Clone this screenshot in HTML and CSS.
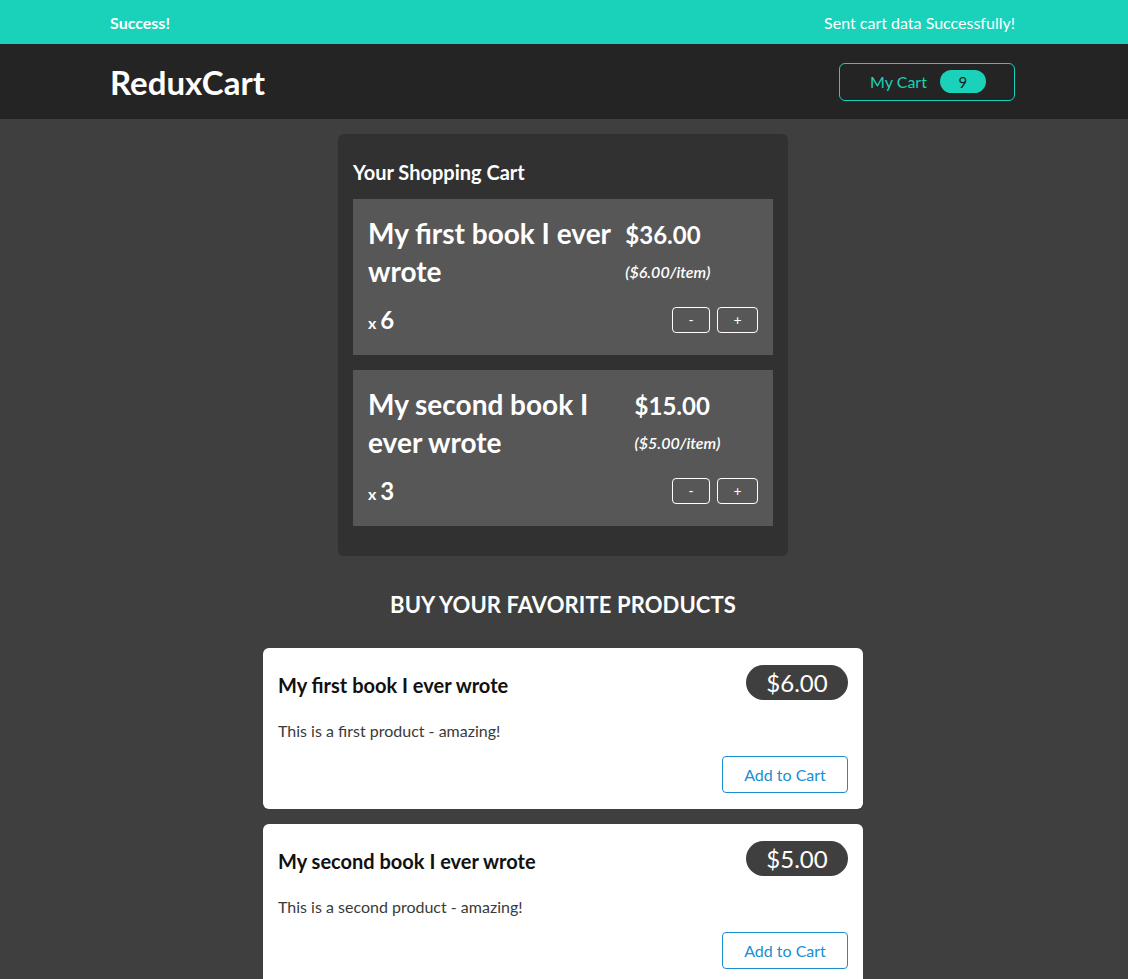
FILE: index.html
```html
<!DOCTYPE html>
<html lang="en">
<head>
<meta charset="utf-8">
<title>ReduxCart</title>
<link rel="stylesheet" href="styles.css">
</head>
<body>
  <section class="notification">
    <h2>Success!</h2>
    <p>Sent cart data Successfully!</p>
  </section>
  <header class="header">
    <h1>ReduxCart</h1>
    <nav>
      <button class="cart-button">
        <span>My Cart</span>
        <span class="badge">9</span>
      </button>
    </nav>
  </header>
  <main class="main">
    <section class="cart">
      <h2 class="cart-title">Your Shopping Cart</h2>
      <ul class="cart-list">
        <li class="item">
          <header class="item-header">
            <h3>My first book I ever wrote</h3>
            <div class="price">$36.00 <span class="itemprice">($6.00/item)</span></div>
          </header>
          <div class="details">
            <div class="quantity">x <span>6</span></div>
            <div class="actions">
              <button>-</button>
              <button>+</button>
            </div>
          </div>
        </li>
        <li class="item">
          <header class="item-header">
            <h3>My second book I ever wrote</h3>
            <div class="price">$15.00 <span class="itemprice">($5.00/item)</span></div>
          </header>
          <div class="details">
            <div class="quantity">x <span>3</span></div>
            <div class="actions">
              <button>-</button>
              <button>+</button>
            </div>
          </div>
        </li>
      </ul>
    </section>

    <section class="products">
      <h2>BUY YOUR FAVORITE PRODUCTS</h2>
      <ul class="product-list">
        <li class="product">
          <header class="product-header">
            <h3>My first book I ever wrote</h3>
            <div class="product-price">$6.00</div>
          </header>
          <p>This is a first product - amazing!</p>
          <div class="product-actions">
            <button>Add to Cart</button>
          </div>
        </li>
        <li class="product">
          <header class="product-header">
            <h3>My second book I ever wrote</h3>
            <div class="product-price">$5.00</div>
          </header>
          <p>This is a second product - amazing!</p>
          <div class="product-actions">
            <button>Add to Cart</button>
          </div>
        </li>
      </ul>
    </section>
  </main>
</body>
</html>
```

FILE: styles.css
```css
* { box-sizing: border-box; }

html, body {
  margin: 0;
  padding: 0;
}

body {
  font-family: Lato, "Noto Sans", sans-serif;
  background-color: #3f3f3f;
  height: 979px;
  overflow: hidden;
}

.notification {
  height: 44px;
  background-color: #1ad1b9;
  display: flex;
  justify-content: space-between;
  align-items: center;
  padding: 0 113px 0 110px;
  color: white;
}

.notification h2,
.notification p {
  font-size: 16px;
  margin: 0;
}

.notification h2 { font-weight: bold; }

.header {
  height: 75px;
  background-color: #252424;
  display: flex;
  justify-content: space-between;
  align-items: center;
  padding: 0 113px 0 110px;
}

.header h1 {
  margin: 0;
  color: white;
  font-size: 33px;
  font-weight: bold;
}

.cart-button {
  width: 176px;
  height: 38px;
  background: transparent;
  border: 1px solid #1ad1b9;
  border-radius: 6px;
  color: #1ad1b9;
  font-family: inherit;
  font-size: 16px;
  display: flex;
  align-items: center;
  justify-content: center;
  gap: 13px;
  padding: 0 0 0 2px;
}

.badge {
  background-color: #1ad1b9;
  color: #1d1d1d;
  border-radius: 30px;
  width: 46px;
  height: 23px;
  display: inline-flex;
  align-items: center;
  justify-content: center;
  font-size: 15px;
}

.main {
  display: flex;
  flex-direction: column;
  align-items: center;
  padding: 15px 2px 0 0;
}

.cart {
  width: 450px;
  background-color: #313131;
  border-radius: 6px;
  padding: 26px 15px 30px;
  color: white;
}

.cart-title {
  margin: 0 0 15px;
  font-size: 20px;
  font-weight: bold;
}

.cart-list,
.product-list {
  list-style: none;
  margin: 0;
  padding: 0;
}

.item {
  background-color: #575757;
  padding: 15px 15px 21px;
  margin-bottom: 15px;
}

.item:last-child { margin-bottom: 0; }

.item-header {
  display: flex;
  justify-content: space-between;
}

.item h3 {
  margin: 0 0 15px;
  font-size: 28px;
  line-height: 38px;
  font-weight: bold;
}

.price {
  font-size: 24px;
  font-weight: bold;
  line-height: 34px;
  padding-top: 4px;
}

.itemprice {
  font-size: 16px;
  font-style: italic;
  font-weight: 600;
}

.details {
  display: flex;
  justify-content: space-between;
  align-items: center;
}

.quantity {
  font-size: 16px;
  font-weight: bold;
}

.quantity span {
  font-size: 24px;
}

.actions {
  display: flex;
  gap: 7px;
}

.actions button {
  background: transparent;
  border: 1px solid white;
  border-radius: 4px;
  color: white;
  font-family: inherit;
  font-size: 14px;
  height: 26px;
  width: 38px;
  padding: 0;
}

.actions button:last-child { width: 41px; }

.products {
  display: flex;
  flex-direction: column;
  align-items: center;
  margin-top: 35px;
}

.products h2 {
  margin: 0 0 30px;
  color: white;
  font-size: 22px;
  font-weight: bold;
  letter-spacing: 0.1px;
}

.product {
  width: 600px;
  background: white;
  border-radius: 6px;
  padding: 17px 15px 16px;
  margin-bottom: 15px;
}

.product-header {
  display: flex;
  justify-content: space-between;
  align-items: flex-start;
}

.product h3 {
  margin: 7px 0 0;
  font-size: 20px;
  line-height: 26px;
  font-weight: bold;
  color: #111;
}

.product-price {
  background-color: #3f3f3f;
  color: white;
  border-radius: 30px;
  width: 102px;
  height: 35px;
  display: flex;
  align-items: center;
  justify-content: center;
  font-size: 24px;
}

.product p {
  margin: 21px 0 15px;
  font-size: 16px;
  line-height: 20px;
  color: #3a3a3a;
}

.product-actions {
  display: flex;
  justify-content: flex-end;
}

.product-actions button {
  background: white;
  border: 1px solid #1a8ed1;
  border-radius: 4px;
  color: #1a8ed1;
  font-family: inherit;
  font-size: 16px;
  width: 126px;
  height: 37px;
  padding: 0;
}
```
